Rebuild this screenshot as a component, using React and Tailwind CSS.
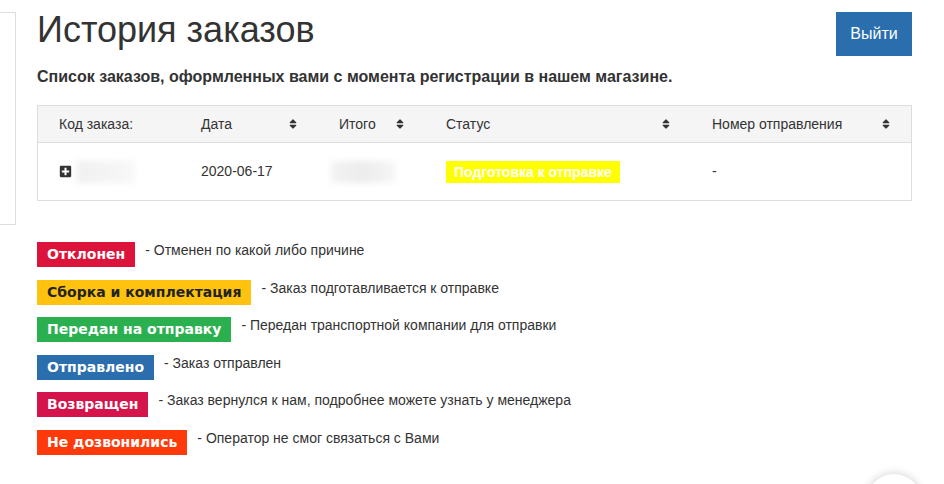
import React from 'react'
import { FaSort, FaPlusSquare } from 'react-icons/fa'

const statuses = [
  { label: 'Отклонен', cls: 'bg-[#dc143c] text-white', text: '- Отменен по какой либо причине' },
  { label: 'Сборка и комплектация', cls: 'bg-[#ffc20e] text-[#222]', text: '- Заказ подготавливается к отправке' },
  { label: 'Передан на отправку', cls: 'bg-[#2bb04f] text-white', text: '- Передан транспортной компании для отправки' },
  { label: 'Отправлено', cls: 'bg-[#2a6ead] text-white', text: '- Заказ отправлен' },
  { label: 'Возвращен', cls: 'bg-[#d4144a] text-white', text: '- Заказ вернулся к нам, подробнее можете узнать у менеджера' },
  { label: 'Не дозвонились', cls: 'bg-[#ff3a0a] text-white', text: '- Оператор не смог связаться с Вами' },
]

function HeadCell({ children, sort }) {
  return (
    <div className="flex items-center justify-between pl-[21px] pr-[19px]">
      <span>{children}</span>
      {sort && <FaSort size={12} className="text-[#333]" />}
    </div>
  )
}

export default function App() {
  return (
    <div className="relative min-h-[484px] bg-white overflow-hidden font-['Liberation_Sans',Arial,sans-serif] text-[#333]">
      <div className="flex">
        {/* Sidebar edge */}
        <div className="w-[16px] h-[213px] mt-[12px] border-t border-r border-b border-[#ddd] shrink-0"></div>

        <div className="ml-[21px] w-[875px]">
          {/* Header */}
          <div className="flex justify-between items-start">
            <h1 className="mt-[10px] text-[36px] leading-[1.1] text-[#333] font-normal">История заказов</h1>
            <button className="mt-[12px] w-[76px] h-[44px] bg-[#2a6ead] text-white text-[16px]">Выйти</button>
          </div>

          <p className="mt-[9px] text-[16px] font-bold text-[#333]">
            Список заказов, оформленных вами с момента регистрации в нашем магазине.
          </p>

          {/* Table */}
          <div className="mt-[16px] border border-[#ddd] text-[14px]">
            <div className="grid grid-cols-[142px_138px_107px_266px_1fr] h-[37px] bg-[#f5f5f5] border-b border-[#ddd]">
              <HeadCell>Код заказа:</HeadCell>
              <HeadCell sort>Дата</HeadCell>
              <HeadCell sort>Итого</HeadCell>
              <HeadCell sort>Статус</HeadCell>
              <HeadCell sort>Номер отправления</HeadCell>
            </div>
            <div className="grid grid-cols-[142px_138px_107px_266px_1fr] h-[57px] items-center">
              <div className="flex items-center pl-[21px] gap-[5px]">
                <FaPlusSquare size={13} className="text-[#333]" />
                <div className="w-[58px] h-[22px] bg-gradient-to-r from-[#f0f0f0] to-[#f8f8f8] blur-[3px]"></div>
              </div>
              <div className="pl-[21px]">2020-06-17</div>
              <div className="pl-[13px]">
                <div className="w-[64px] h-[22px] bg-gradient-to-r from-[#f3f3f3] via-[#ececec] to-[#f6f6f6] blur-[3px]"></div>
              </div>
              <div className="pl-[21px]">
                <span className="inline-block bg-[#ffff00] text-white font-bold text-[14px] px-[8px] py-[3px] leading-[16px]">
                  Подготовка к отправке
                </span>
              </div>
              <div className="pl-[21px]">-</div>
            </div>
          </div>

          {/* Legend */}
          <div className="mt-[41px] flex flex-col gap-[12.6px]">
            {statuses.map((s) => (
              <div key={s.label} className="flex items-start gap-[10px]">
                <span className={`h-[25px] px-[10px] flex items-center font-['DejaVu_Sans',Verdana,sans-serif] font-bold text-[14px] ${s.cls}`}>
                  {s.label}
                </span>
                <span className="text-[14px] leading-4 text-[#333]">{s.text}</span>
              </div>
            ))}
          </div>
        </div>
      </div>

      {/* Floating widget */}
      <div className="absolute right-[22px] bottom-[-46px] w-[56px] h-[56px] rounded-full bg-white shadow-[0_0_10px_rgba(0,0,0,0.2)]"></div>
    </div>
  )
}
